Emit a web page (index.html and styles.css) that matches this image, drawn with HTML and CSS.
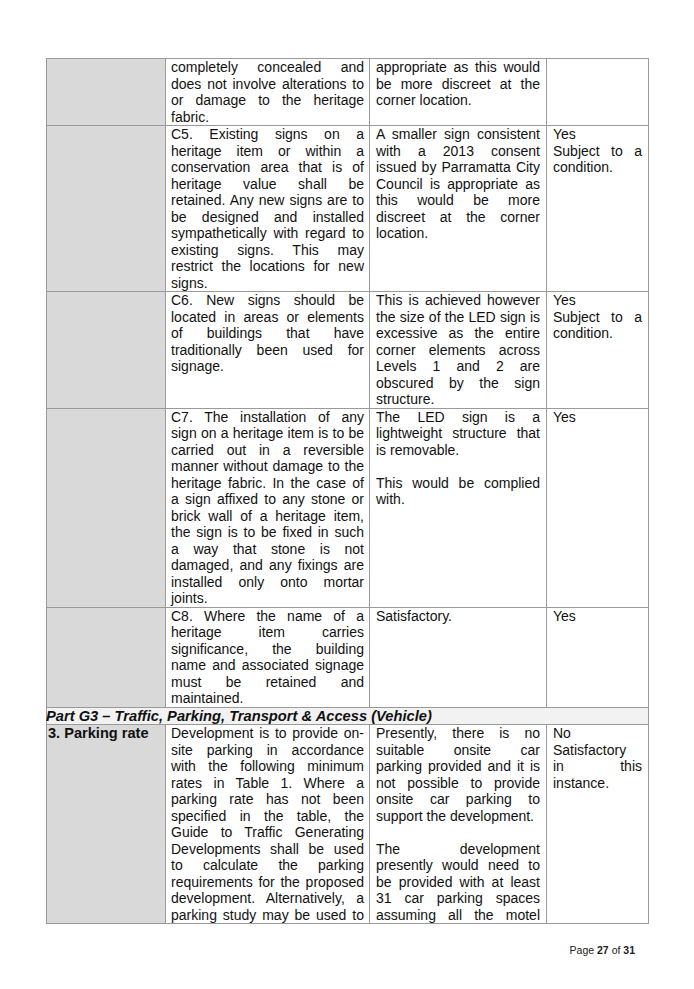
FILE: index.html
```html
<!DOCTYPE html>
<html lang="en">
<head>
<meta charset="utf-8">
<title>Assessment table – page 27</title>
<link rel="stylesheet" href="styles.css">
</head>
<body>
<div class="page">
  <table class="review">
    <colgroup>
      <col class="c1"><col class="c2"><col class="c3"><col class="c4">
    </colgroup>
    <tbody>
      <tr>
        <td class="label"></td>
        <td class="ctrl">
          <p><span class="ln">completely concealed and</span><span class="ln">does not involve alterations to</span><span class="ln">or damage to the heritage</span><span class="ln end">fabric.</span></p>
        </td>
        <td class="note">
          <p><span class="ln">appropriate as this would</span><span class="ln">be more discreet at the</span><span class="ln end">corner location.</span></p>
        </td>
        <td class="result"></td>
      </tr>
      <tr>
        <td class="label"></td>
        <td class="ctrl">
          <p><span class="ln">C5. Existing signs on a</span><span class="ln">heritage item or within a</span><span class="ln">conservation area that is of</span><span class="ln">heritage value shall be</span><span class="ln">retained. Any new signs are to</span><span class="ln">be designed and installed</span><span class="ln">sympathetically with regard to</span><span class="ln">existing signs. This may</span><span class="ln">restrict the locations for new</span><span class="ln end">signs.</span></p>
        </td>
        <td class="note">
          <p><span class="ln">A smaller sign consistent</span><span class="ln">with a 2013 consent</span><span class="ln">issued by Parramatta City</span><span class="ln">Council is appropriate as</span><span class="ln">this would be more</span><span class="ln">discreet at the corner</span><span class="ln end">location.</span></p>
        </td>
        <td class="result">
          <p><span class="ln end">Yes</span><span class="ln">Subject to a</span><span class="ln end">condition.</span></p>
        </td>
      </tr>
      <tr>
        <td class="label"></td>
        <td class="ctrl">
          <p><span class="ln">C6. New signs should be</span><span class="ln">located in areas or elements</span><span class="ln">of buildings that have</span><span class="ln">traditionally been used for</span><span class="ln end">signage.</span></p>
        </td>
        <td class="note">
          <p><span class="ln">This is achieved however</span><span class="ln">the size of the LED sign is</span><span class="ln">excessive as the entire</span><span class="ln">corner elements across</span><span class="ln">Levels 1 and 2 are</span><span class="ln">obscured by the sign</span><span class="ln end">structure.</span></p>
        </td>
        <td class="result">
          <p><span class="ln end">Yes</span><span class="ln">Subject to a</span><span class="ln end">condition.</span></p>
        </td>
      </tr>
      <tr>
        <td class="label"></td>
        <td class="ctrl">
          <p><span class="ln">C7. The installation of any</span><span class="ln">sign on a heritage item is to be</span><span class="ln">carried out in a reversible</span><span class="ln">manner without damage to the</span><span class="ln">heritage fabric. In the case of</span><span class="ln">a sign affixed to any stone or</span><span class="ln">brick wall of a heritage item,</span><span class="ln">the sign is to be fixed in such</span><span class="ln">a way that stone is not</span><span class="ln">damaged, and any fixings are</span><span class="ln">installed only onto mortar</span><span class="ln end">joints.</span></p>
        </td>
        <td class="note">
          <p><span class="ln">The LED sign is a</span><span class="ln">lightweight structure that</span><span class="ln end">is removable.</span></p>
          <p class="gap"></p>
          <p><span class="ln">This would be complied</span><span class="ln end">with.</span></p>
        </td>
        <td class="result">
          <p><span class="ln end">Yes</span></p>
        </td>
      </tr>
      <tr>
        <td class="label"></td>
        <td class="ctrl">
          <p><span class="ln">C8. Where the name of a</span><span class="ln">heritage item carries</span><span class="ln">significance, the building</span><span class="ln">name and associated signage</span><span class="ln">must be retained and</span><span class="ln end">maintained.</span></p>
        </td>
        <td class="note">
          <p><span class="ln end">Satisfactory.</span></p>
        </td>
        <td class="result">
          <p><span class="ln end">Yes</span></p>
        </td>
      </tr>
      <tr class="section">
        <td colspan="4">Part G3 – Traffic, Parking, Transport &amp; Access (Vehicle)</td>
      </tr>
      <tr>
        <td class="label"><strong>3. Parking rate</strong></td>
        <td class="ctrl">
          <p><span class="ln">Development is to provide on-</span><span class="ln">site parking in accordance</span><span class="ln">with the following minimum</span><span class="ln">rates in Table 1. Where a</span><span class="ln">parking rate has not been</span><span class="ln">specified in the table, the</span><span class="ln">Guide to Traffic Generating</span><span class="ln">Developments shall be used</span><span class="ln">to calculate the parking</span><span class="ln">requirements for the proposed</span><span class="ln">development. Alternatively, a</span><span class="ln">parking study may be used to</span></p>
        </td>
        <td class="note">
          <p><span class="ln">Presently, there is no</span><span class="ln">suitable onsite car</span><span class="ln">parking provided and it is</span><span class="ln">not possible to provide</span><span class="ln">onsite car parking to</span><span class="ln end">support the development.</span></p>
          <p class="gap"></p>
          <p><span class="ln">The development</span><span class="ln">presently would need to</span><span class="ln">be provided with at least</span><span class="ln">31 car parking spaces</span><span class="ln">assuming all the motel</span></p>
        </td>
        <td class="result">
          <p><span class="ln end">No</span><span class="ln">Satisfactory</span><span class="ln">in this</span><span class="ln end">instance.</span></p>
        </td>
      </tr>
    </tbody>
  </table>
  <div class="footer">Page <b>27</b> of <b>31</b></div>
</div>
</body>
</html>
```

FILE: styles.css
```css
html, body {
  margin: 0;
  padding: 0;
  background: #ffffff;
}

.page {
  width: 694px;
  height: 989px;
  box-sizing: border-box;
  padding: 58px 0 0 46px;
  font-family: "Liberation Sans", Arial, sans-serif;
  color: #111111;
}

.review {
  border-collapse: collapse;
  table-layout: fixed;
  width: 602px;
  font-size: 14px;
  line-height: 16.5px;
}

.review col.c1 { width: 119px; }
.review col.c2 { width: 204px; }
.review col.c3 { width: 177px; }
.review col.c4 { width: 102px; }

.review td {
  border: 1px solid #9a9a9a;
  vertical-align: top;
  padding: 0 6px;
}

.review td.label {
  background: #d9d9d9;
  padding: 0 1px;
}

.review td.label strong {
  font-size: 14.6px;
}

.review td.ctrl {
  padding: 0 5px;
}

.review p {
  margin: 0;
}

.review p.gap {
  height: 16.5px;
}

.ln {
  display: block;
  text-align: justify;
  text-align-last: justify;
  white-space: nowrap;
}

.ln.end {
  text-align-last: left;
}

.section td {
  background: #f2f2f2;
  font-weight: bold;
  font-style: italic;
  font-size: 14.7px;
  padding: 0;
  text-indent: -1px;
}

.footer {
  width: 589px;
  margin-top: 20px;
  text-align: right;
  font-size: 10.5px;
  line-height: 12px;
  color: #222222;
}

.footer b {
  font-weight: bold;
}
```
